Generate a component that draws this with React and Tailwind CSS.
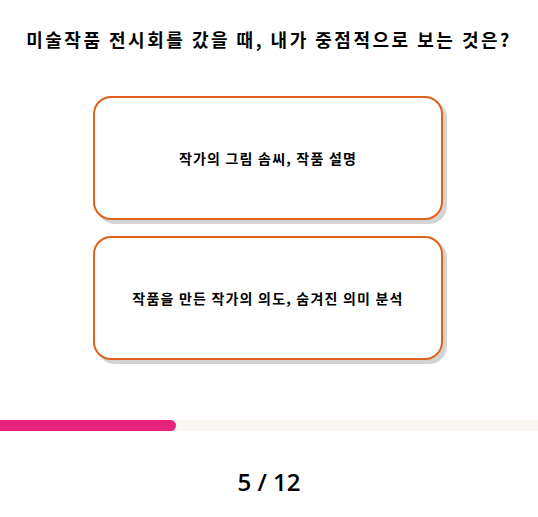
import React from "react";

const options = ["작가의 그림 솜씨, 작품 설명", "작품을 만든 작가의 의도, 숨겨진 의미 분석"];

export default function App() {
  const current = 5;
  const total = 12;

  return (
    <div
      className="w-[538px] h-[517px] bg-white flex flex-col text-black"
      style={{ fontFamily: '"Noto Sans CJK KR", "Noto Sans", sans-serif' }}
    >
      {/* Question */}
      <h1 className="mt-[25px] text-center text-[18px] leading-[28px] font-bold tracking-[2.5px]">
        미술작품 전시회를 갔을 때, 내가 중점적으로 보는 것은?
      </h1>

      {/* Options */}
      <div className="mt-[43px] flex flex-col items-center gap-[16px] pr-[2px]">
        {options.map((text) => (
          <button
            key={text}
            className="w-[350px] h-[124px] rounded-[18px] border-2 border-[#e0621c] bg-white shadow-[4px_4px_0_#d4d4d4] flex items-center justify-center text-[14px] font-bold tracking-[1.2px]"
          >
            {text}
          </button>
        ))}
      </div>

      {/* Progress */}
      <div className="mt-[60px] h-[11px] w-full bg-[#faf6f1]">
        <div className="h-full w-[176px] bg-[#e8237f] rounded-r-full" />
      </div>

      {/* Counter */}
      <div
        className="mt-[36px] text-center text-[24px] font-semibold leading-[30px]"
        style={{ fontFamily: '"Open Sans", "Noto Sans", sans-serif' }}
      >
        {current} / {total}
      </div>
    </div>
  );
}
